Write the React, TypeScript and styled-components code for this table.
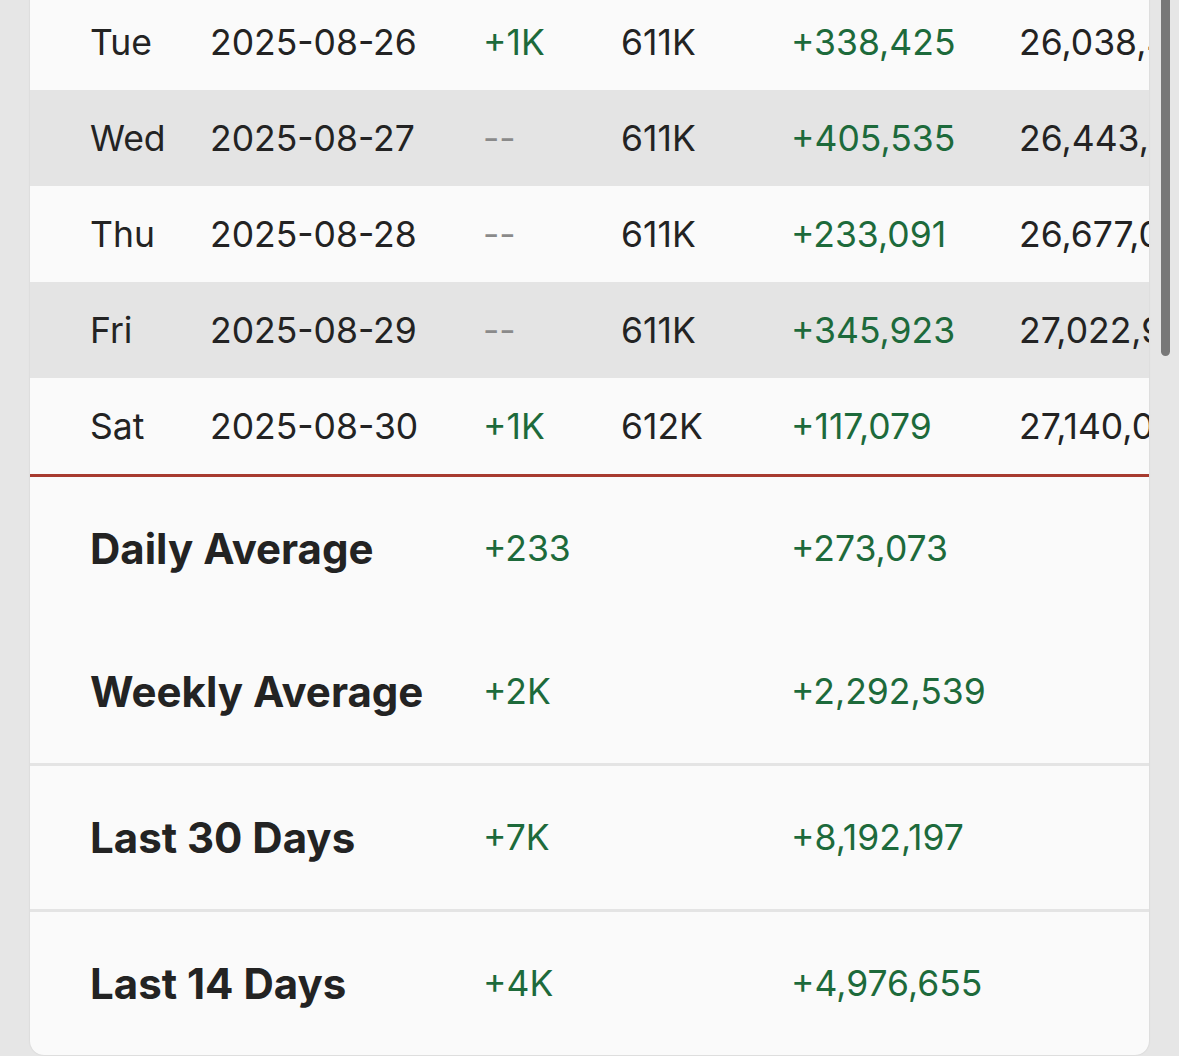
import styled, { createGlobalStyle } from 'styled-components';

const GlobalStyle = createGlobalStyle`
  html, body {
    margin: 0;
    padding: 0;
    background-color: #e6e6e6;
    font-family: Inter, "Noto Sans", "Liberation Sans", sans-serif;
    overflow: hidden;
  }
`;

const Green = '#1d6a3b';
const Ink = '#232323';
const Muted = '#8a8a8a';

const Page = styled.div`
  display: flex;
  height: 1056px;
  overflow: hidden;
`;

const Card = styled.div`
  margin: -6px 0 1px 30px;
  width: 1119px;
  background-color: #fafafa;
  border-radius: 0 0 14px 14px;
  box-shadow: 0 0 2px rgba(0, 0, 0, 0.12);
  overflow: hidden;
  align-self: flex-start;
`;

const ScrollTrack = styled.div`
  width: 30px;
  padding-left: 12px;
  box-sizing: border-box;
`;

const ScrollThumb = styled.div`
  width: 9px;
  height: 362px;
  margin-top: -6px;
  background-color: #787878;
  border-radius: 5px;
`;

// day, date, follower change, followers, view change, total views
const DayRow = styled.div<{ $striped?: boolean }>`
  display: grid;
  grid-template-columns: 120px 273px 138px 170px 228px 300px;
  align-items: center;
  height: 96px;
  padding-left: 60px;
  background-color: ${({ $striped }) => ($striped ? '#e4e4e4' : '#fafafa')};
  font-size: 35.5px;
  color: ${Ink};
  white-space: nowrap;
`;

const Cell = styled.span<{ $tone?: 'green' | 'muted' }>`
  color: ${({ $tone }) => ($tone === 'green' ? Green : $tone === 'muted' ? Muted : Ink)};
`;

const Divider = styled.div`
  height: 3px;
  background-color: #a73b2f;
`;

const SummaryRow = styled.div<{ $separated?: boolean }>`
  display: grid;
  grid-template-columns: 393px 308px 300px;
  align-items: center;
  height: 143px;
  padding-left: 60px;
  border-top: ${({ $separated }) => ($separated ? '3px solid #e4e4e4' : 'none')};
  white-space: nowrap;
`;

const SummaryLabel = styled.span`
  font-size: 42px;
  font-weight: 700;
  color: ${Ink};
`;

const SummaryValue = styled.span`
  font-size: 35.5px;
  color: ${Green};
`;

const days = [
  { day: 'Tue', date: '2025-08-26', change: '+1K', followers: '611K', views: '+338,425', total: '26,038,422' },
  { day: 'Wed', date: '2025-08-27', change: '--', followers: '611K', views: '+405,535', total: '26,443,957' },
  { day: 'Thu', date: '2025-08-28', change: '--', followers: '611K', views: '+233,091', total: '26,677,048' },
  { day: 'Fri', date: '2025-08-29', change: '--', followers: '611K', views: '+345,923', total: '27,022,971' },
  { day: 'Sat', date: '2025-08-30', change: '+1K', followers: '612K', views: '+117,079', total: '27,140,050' },
];

const summary = [
  { label: 'Daily Average', change: '+233', views: '+273,073' },
  { label: 'Weekly Average', change: '+2K', views: '+2,292,539' },
  { label: 'Last 30 Days', change: '+7K', views: '+8,192,197' },
  { label: 'Last 14 Days', change: '+4K', views: '+4,976,655' },
];

const App = () => (
  <>
    <GlobalStyle />
    <Page>
      <Card>
        {days.map((item, index) => (
          <DayRow key={item.date} $striped={index % 2 === 1}>
            <Cell>{item.day}</Cell>
            <Cell>{item.date}</Cell>
            <Cell $tone={item.change === '--' ? 'muted' : 'green'}>{item.change}</Cell>
            <Cell>{item.followers}</Cell>
            <Cell $tone="green">{item.views}</Cell>
            <Cell>{item.total}</Cell>
          </DayRow>
        ))}
        <Divider />
        {summary.map((item, index) => (
          <SummaryRow key={item.label} $separated={index >= 2}>
            <SummaryLabel>{item.label}</SummaryLabel>
            <SummaryValue>{item.change}</SummaryValue>
            <SummaryValue>{item.views}</SummaryValue>
          </SummaryRow>
        ))}
      </Card>
      <ScrollTrack>
        <ScrollThumb />
      </ScrollTrack>
    </Page>
  </>
);

export default App;
